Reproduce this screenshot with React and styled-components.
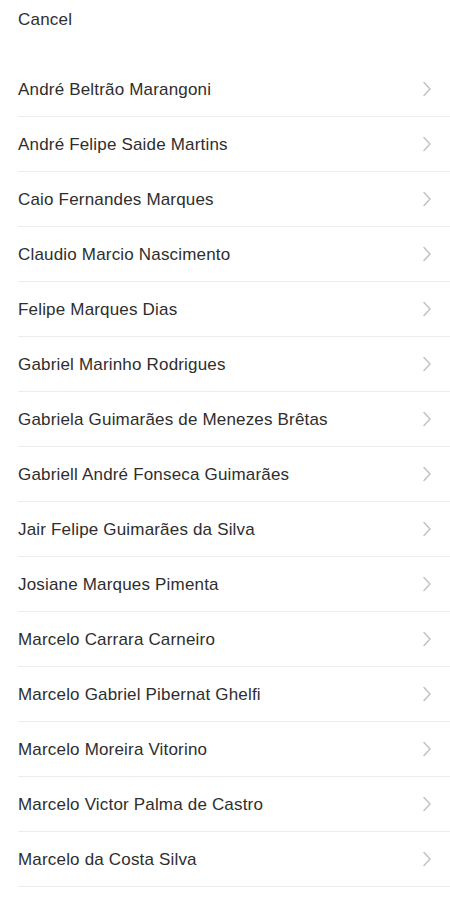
import React from "react";
import styled, { createGlobalStyle } from "styled-components";

const Global = createGlobalStyle`
  html, body { margin: 0; padding: 0; background: #fff; }
  body { font-family: "Liberation Sans", Arial, sans-serif; }
`;

const Page = styled.div`
  width: 450px;
  background: #fff;
  color: #2e2e2e;
`;

const Header = styled.div`
  height: 62px;
  padding: 0 18px;
  display: flex;
  align-items: flex-start;
`;

const CancelButton = styled.button`
  border: 0;
  background: none;
  padding: 0;
  margin-top: 10px;
  font: inherit;
  font-size: 17px;
  line-height: 20px;
  letter-spacing: 0.2px;
  color: #2e2e2e;
  cursor: pointer;
`;

const List = styled.ul`
  list-style: none;
  margin: 0;
  padding: 0 0 0 18px;
`;

const Row = styled.li`
  height: 54px;
  display: flex;
  align-items: center;
  justify-content: space-between;
  padding-right: 18px;
  border-bottom: 1px solid #ececec;
`;

const Name = styled.span`
  font-size: 17px;
  line-height: 20px;
  padding-top: 1px;
  color: #2e2e2e;
  letter-spacing: 0.18px;
`;

const Chevron = () => (
  <svg width="10" height="16" viewBox="0 0 10 16" fill="none">
    <path d="M2 1.5 L8 8 L2 14.5" stroke="#c4c4c4" strokeWidth="1.6" strokeLinecap="round" strokeLinejoin="round" />
  </svg>
);

const names = [
  "André Beltrão Marangoni",
  "André Felipe Saide Martins",
  "Caio Fernandes Marques",
  "Claudio Marcio Nascimento",
  "Felipe Marques Dias",
  "Gabriel Marinho Rodrigues",
  "Gabriela Guimarães de Menezes Brêtas",
  "Gabriell André Fonseca Guimarães",
  "Jair Felipe Guimarães da Silva",
  "Josiane Marques Pimenta",
  "Marcelo Carrara Carneiro",
  "Marcelo Gabriel Pibernat Ghelfi",
  "Marcelo Moreira Vitorino",
  "Marcelo Victor Palma de Castro",
  "Marcelo da Costa Silva",
];

export default function App() {
  return (
    <Page>
      <Global />
      <Header>
        <CancelButton>Cancel</CancelButton>
      </Header>
      <List>
        {names.map((n) => (
          <Row key={n}>
            <Name>{n}</Name>
            <Chevron />
          </Row>
        ))}
      </List>
    </Page>
  );
}
